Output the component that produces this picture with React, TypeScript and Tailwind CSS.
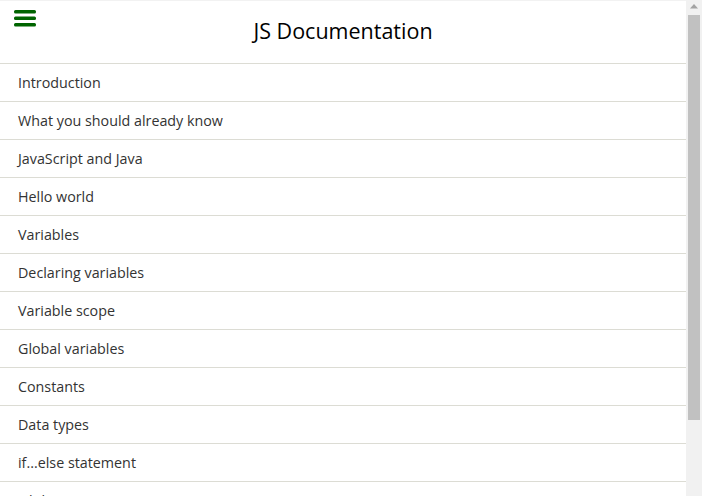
const topics = [
  'Introduction',
  'What you should already know',
  'JavaScript and Java',
  'Hello world',
  'Variables',
  'Declaring variables',
  'Variable scope',
  'Global variables',
  'Constants',
  'Data types',
  'if...else statement',
  'while statement',
  'Function declarations',
]

function Scrollbar() {
  return (
    <div className="w-4 shrink-0 h-full bg-[#f1f1f1] flex flex-col">
      <div className="h-[15px] flex items-center justify-center pb-[3px] pr-[1px]">
        <svg width="8" height="5" viewBox="0 0 8 5" fill="#a3a3a3">
          <polygon points="4,0 8,4.5 0,4.5" />
        </svg>
      </div>
      <div className="h-[405px] mx-[2px] bg-[#c1c1c1]" />
    </div>
  )
}

export default function App() {
  return (
    <div className="h-screen flex overflow-hidden bg-white font-['Open_Sans',sans-serif] text-[#333]">
      <div className="flex-1 min-w-0">
        {/* Header */}
        <header className="relative h-[64px] border-t border-[#f2f2f2] border-b border-b-[#dcdcd4] flex items-center justify-center">
          <button className="absolute left-[14px] top-[8px] text-[#006400]">
            <svg width="22" height="19" viewBox="0 0 22 19" fill="currentColor">
              <rect x="0" y="1" width="22" height="3.5" rx="1.5" />
              <rect x="0" y="7.5" width="22" height="3.5" rx="1.5" />
              <rect x="0" y="14" width="22" height="3.5" rx="1.5" />
            </svg>
          </button>
          <h1 className="text-[21.5px] text-black leading-none -mt-[3px]">JS Documentation</h1>
        </header>

        {/* Topic list */}
        <nav>
          <ul>
            {topics.map((t) => (
              <li key={t} className="h-[38px] border-b border-[#dcdcd4] flex items-center pl-[18px] text-[14.3px]">
                <a href="#">{t}</a>
              </li>
            ))}
          </ul>
        </nav>
      </div>
      <Scrollbar />
    </div>
  )
}
